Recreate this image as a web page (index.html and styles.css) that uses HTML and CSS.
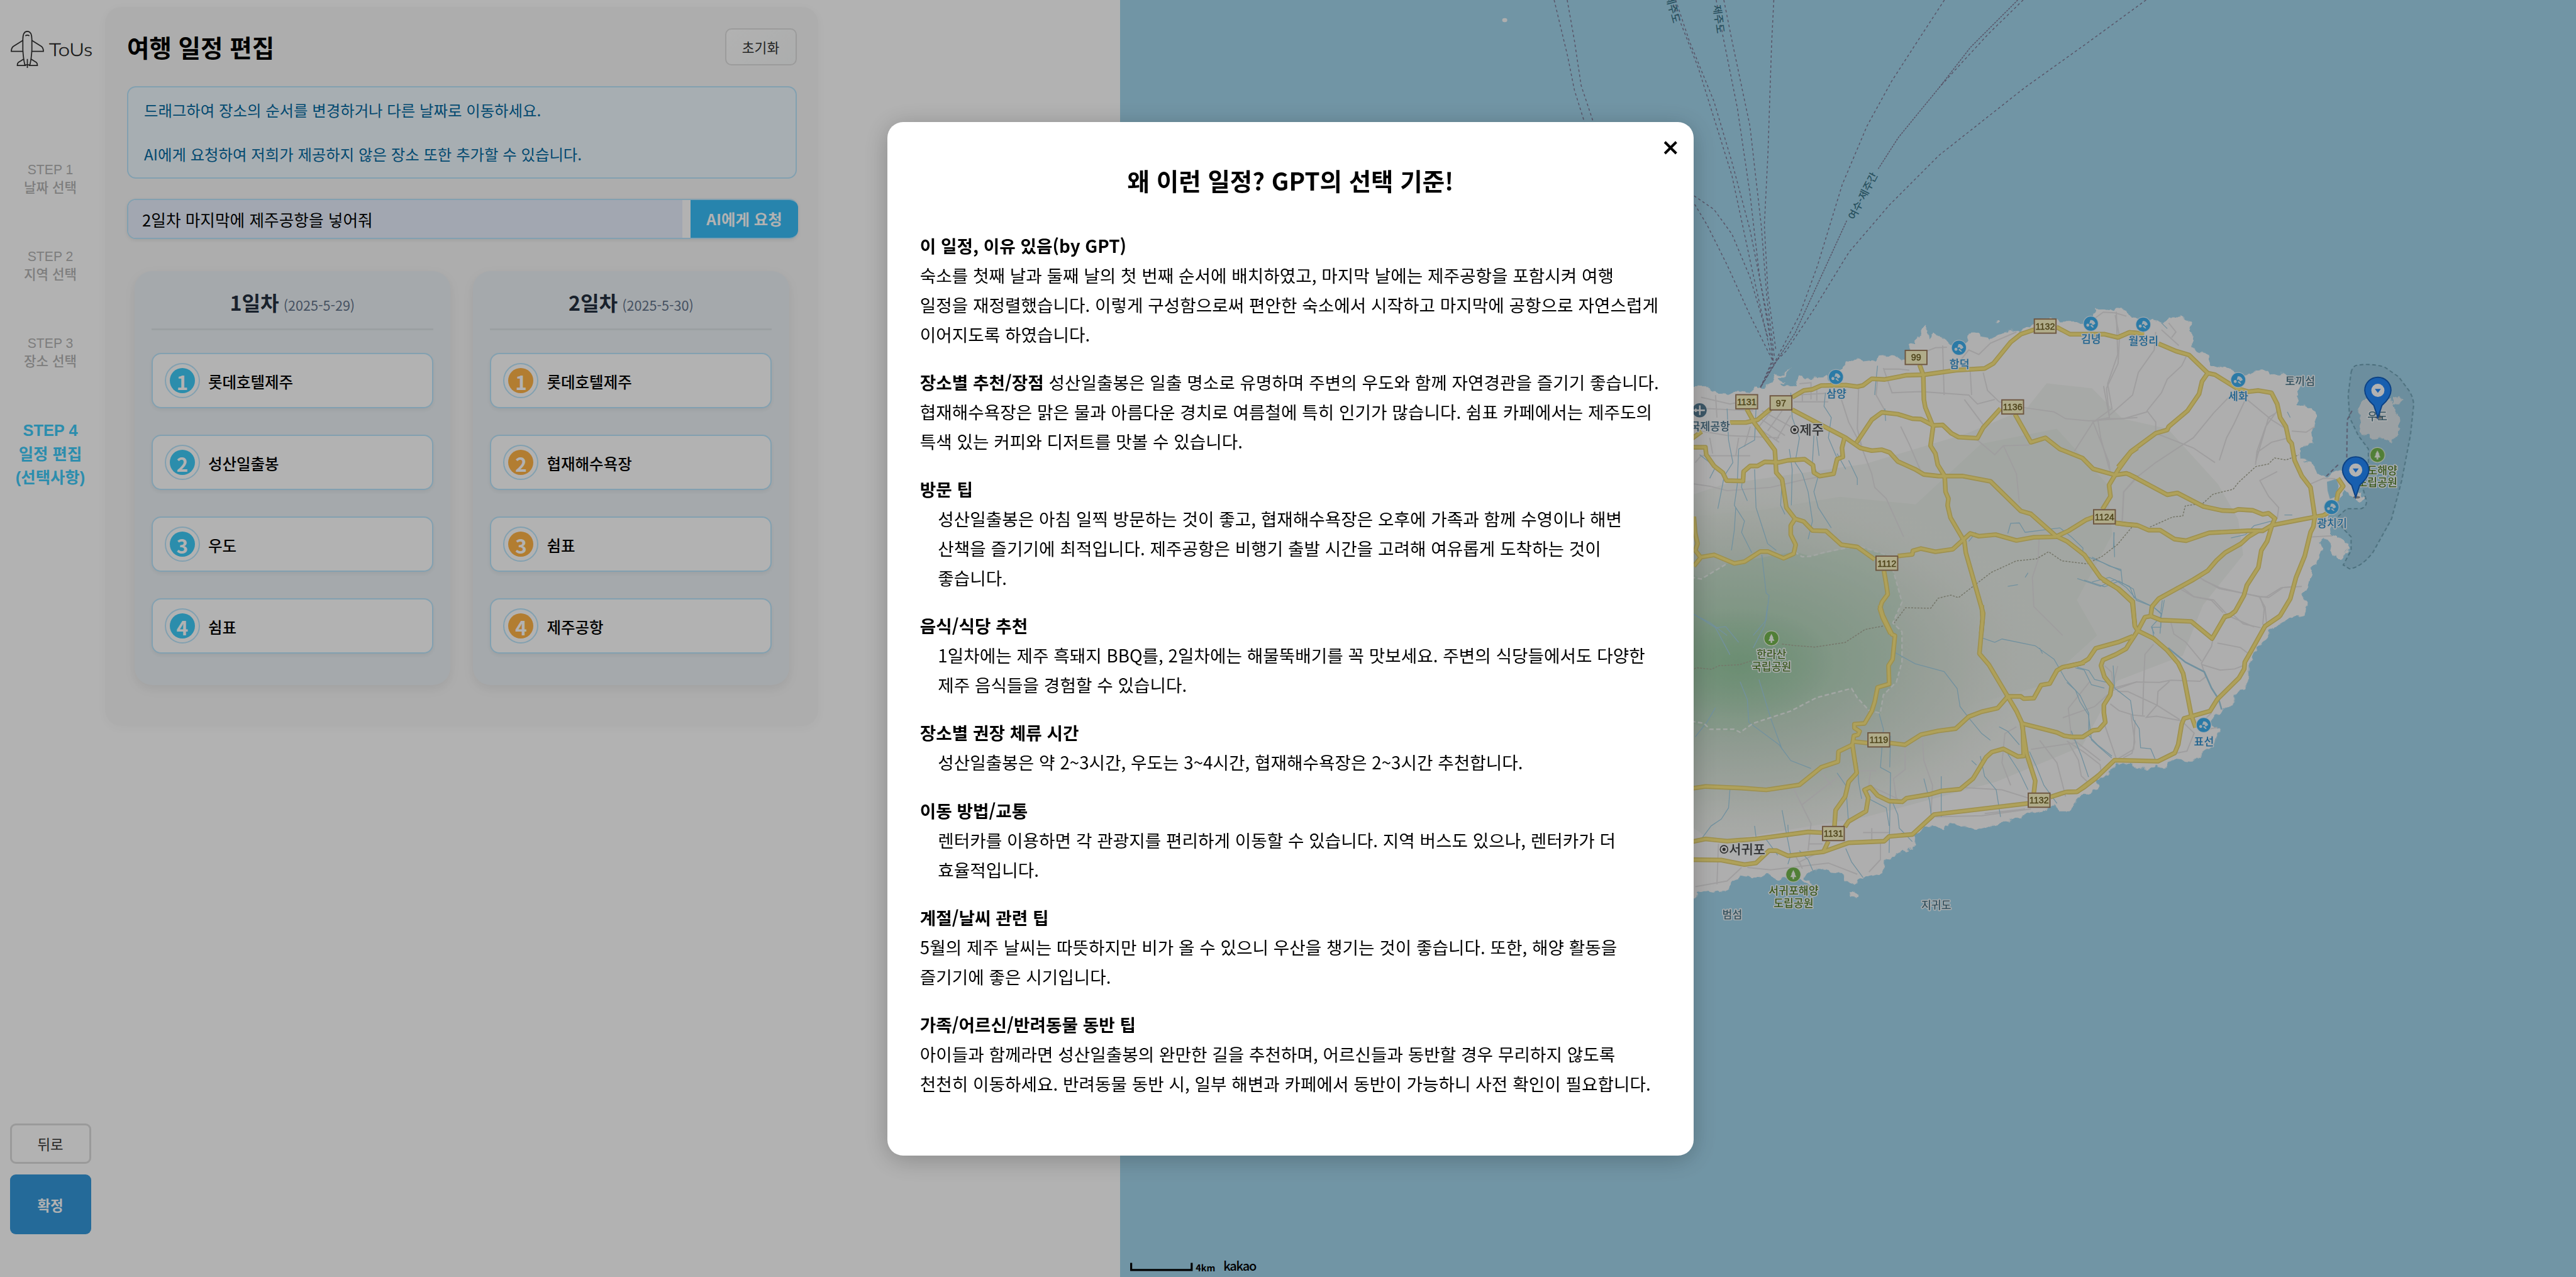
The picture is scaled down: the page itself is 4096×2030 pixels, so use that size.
FILE: index.html
```html
<!DOCTYPE html>
<html lang="ko">
<head>
<meta charset="utf-8">
<title>ToUs - 여행 일정 편집</title>
<link rel="stylesheet" href="styles.css">
</head>
<body>
<div class="app">
  <aside class="sidebar">
    <div class="logo">
      <svg class="logo-plane" viewBox="0 0 66 74">
        <path d="M24 17 Q24 1 33 1 Q42 1 42 17 L42 38 Q41 56 38 68 H28 Q25 56 24 38 Z"/>
        <path d="M24 19 L5 31 Q1 34 1 41 H24 M42 19 L61 31 Q65 34 65 41 H42"/>
        <path d="M26 56 L15 63 Q13 65 13 69 H30 M40 56 L51 63 Q53 65 53 69 H36 M33 56 V74 M29 10 Q33 7 37 10"/>
      </svg>
      <svg class="logo-name" viewBox="0 0 72 30"><text x="0" y="25" textLength="69" lengthAdjust="spacingAndGlyphs">ToUs</text></svg>
    </div>
    <ol class="steps">
      <li class="step">STEP 1<span>날짜 선택</span></li>
      <li class="step">STEP 2<span>지역 선택</span></li>
      <li class="step">STEP 3<span>장소 선택</span></li>
      <li class="step step-active">STEP 4<span>일정 편집</span><span>(선택사항)</span></li>
    </ol>
    <div class="sidebar-actions">
      <button class="btn-back">뒤로</button>
      <button class="btn-confirm">확정</button>
    </div>
  </aside>

  <main class="content">
    <section class="panel">
      <header class="panel-head">
        <h1>여행 일정 편집</h1>
        <button class="btn-reset">초기화</button>
      </header>
      <div class="notice">
        <p>드래그하여 장소의 순서를 변경하거나 다른 날짜로 이동하세요.</p>
        <p>AI에게 요청하여 저희가 제공하지 않은 장소 또한 추가할 수 있습니다.</p>
      </div>
      <div class="ask">
        <div class="ask-input">2일차 마지막에 제주공항을 넣어줘</div>
        <button class="ask-button">AI에게 요청</button>
      </div>
      <div class="days">
        <article class="day">
          <h2>1일차 <small>(2025-5-29)</small></h2>
          <ul>
            <li class="place"><i><b>1</b></i><span>롯데호텔제주</span></li>
            <li class="place"><i><b>2</b></i><span>성산일출봉</span></li>
            <li class="place"><i><b>3</b></i><span>우도</span></li>
            <li class="place"><i><b>4</b></i><span>쉼표</span></li>
          </ul>
        </article>
        <article class="day day-second">
          <h2>2일차 <small>(2025-5-30)</small></h2>
          <ul>
            <li class="place"><i><b>1</b></i><span>롯데호텔제주</span></li>
            <li class="place"><i><b>2</b></i><span>협재해수욕장</span></li>
            <li class="place"><i><b>3</b></i><span>쉼표</span></li>
            <li class="place"><i><b>4</b></i><span>제주공항</span></li>
          </ul>
        </article>
      </div>
    </section>
  </main>

  <svg class="map" viewBox="2222 0 2888 2532" preserveAspectRatio="none">
    <defs>
      <filter id="coast" x="-5%" y="-5%" width="110%" height="110%">
        <feTurbulence type="fractalNoise" baseFrequency="0.06" numOctaves="2" seed="4"/>
        <feDisplacementMap in="SourceGraphic" scale="16" xChannelSelector="R" yChannelSelector="G"/>
      </filter>
      <radialGradient id="halla">
        <stop offset="0" stop-color="#a6cfae"/>
        <stop offset=".3" stop-color="#bfd8c4"/>
        <stop offset=".55" stop-color="#d3e1d5"/>
        <stop offset=".78" stop-color="#e3eae2"/>
        <stop offset="1" stop-color="#ecf0eb" stop-opacity="0"/>
      </radialGradient>
      <radialGradient id="peak">
        <stop offset="0" stop-color="#8fc49a" stop-opacity=".75"/>
        <stop offset="1" stop-color="#8fc49a" stop-opacity="0"/>
      </radialGradient>
      <symbol id="beach" viewBox="-17 -17 34 34">
        <circle r="15.5" fill="#e4f1fa"/><circle r="14" fill="#3eafee"/>
        <path d="M-1-7 Q6-8 9 0 L4 3 L1-1 L-3 0 Z M-6 0 a3 3 0 1 0 .1 0 M1 2 L6 7 L4 8 L-1 4 Z" fill="#e6f4fc"/>
      </symbol>
      <symbol id="park" viewBox="-17 -17 34 34">
        <circle r="15.5" fill="#eef5e6"/><circle r="14" fill="#75b64f"/>
        <path d="M0-9 L4-1 L3-1 L6 5 H1.5 V9 H-1.5 V5 H-6 L-3-1 L-4-1 Z" fill="#f4faef"/>
      </symbol>
      <symbol id="pin" viewBox="-30 -30 60 88">
        <ellipse cx="2" cy="54" rx="7" ry="2.5" fill="#222" opacity=".45"/>
        <path d="M0 54 L-8 30 Q-26 14 -26 0 A26 26 0 0 1 26 0 Q26 14 8 30 Z" fill="#2389fb" stroke="#145fbd" stroke-width="2"/>
        <circle r="13" fill="#fff"/><path d="M-6-3 H6 L0 5 Z" fill="#2389fb"/>
      </symbol>
      <g id="roads">
        <g transform="translate(3340 560) scale(.57398 .44643)">
          <path d="M160 622H215L255 610 300 562M375 510L415 480 445 475 475 458 560 456 600 463 620 457 650 428 695 431 770 412 830 410 940 390 1040 382 1070 360 1130 265 1165 230 1215 208M1288 198L1335 230H1455L1500 244 1540 222 1568 225"/>
          <path d="M218 562L245 625 315 745 320 845 340 875 355 1000 385 1050 415 1062 445 1102 492 1104 545 1165 600 1175 660 1230M692 1280L700 1340 705 1385 685 1420 678 1450 688 1490 715 1560"/>
          <path d="M385 1050L370 1080V1120L387 1165 380 1205 345 1225 290 1195H265L210 1240 175 1248 105 1210 60 1220 35 1260M35 1040L40 1115 48 1160 40 1190 58 1220M30 692L62 662"/>
          <path d="M375 565L560 690 610 735 650 747 685 743 712 755 740 795 800 830 830 853 880 860H965L1060 883 1165 1015 1200 1028 1285 1125 1325 1150 1385 1210 1440 1310 1500 1360 1550 1420 1560 1530"/>
          <path d="M815 365L828 410 830 520 835 555 862 640 853 725 870 760 878 810 902 860 905 930 915 960 912 990 922 1045 970 1150 975 1200 1005 1335 1035 1470 1028 1560"/>
          <path d="M597 712L650 610 685 577 740 585 790 605 820 607 862 635 895 633 925 670 950 687 1015 692 1035 645 1095 560M1145 585L1200 710 1250 690 1300 740 1378 780 1415 828 1490 855 1530 848 1568 870"/>
          <path d="M20 732H75L78 765 105 815 135 845 148 880 205 882 207 840 230 815H255L280 797 330 799 360 790 418 785 447 812 450 845 470 860 518 850 530 785 550 775 547 735 556 690"/>
          <path d="M740 1215L790 1208 792 1192 820 1182 870 1196 930 1185 990 1115 1020 1127 1078 1120 1150 1146 1210 1132 1285 1130 1330 1103 1390 1055 1417 1042M1447 1008L1475 950 1470 900 1500 835 1545 755 1568 735M1492 1068L1530 1075 1568 1078"/>
        </g>
        <g transform="translate(4150 560) scale(.57398 .44643)">
          <path d="M90 244L130 222 180 228M230 272L290 305 335 322 400 403 425 410 500 470 540 485 575 480 620 490 640 540 650 600 670 640 680 700 690 715 700 790 725 860 755 910 770 1040 765 1085 755 1110 735 1215 705 1310 685 1405 650 1480 605 1520"/>
          <path d="M400 403L380 440 370 495 330 570 265 640 260 655 220 670 135 750 90 820"/>
          <path d="M125 850L260 943 295 935 385 995 450 1013 490 1015 505 1008 555 1012 590 1030 610 1025 632 1048 622 1078M80 1068L160 1080 195 1100H235L285 1140 325 1147 405 1112 540 1103H590L622 1078 735 1050 800 1035 825 1015"/>
          <path d="M622 1078L605 1150 585 1190 575 1265 535 1345 525 1390 495 1460 475 1480 455 1485M575 1103L540 1130 515 1160 460 1200 430 1235 400 1280 350 1320 230 1405 207 1440 203 1480M850 870L868 905 850 935 845 970"/>
        </g>
        <g transform="translate(3340 1200) scale(.57398 .44643)">
          <path d="M678 0L688 45 720 130 730 135 722 240 708 268 710 350 670 365 660 430 650 470 625 525 590 528V545L608 560 603 575 588 580 583 620 590 680 598 745 570 785 558 850 525 910 521 982M500 1048L483 1095"/>
          <path d="M583 605L635 612M713 612L765 620 820 575 880 558 940 548 985 495 1030 473 1085 457 1120 405 1165 405 1175 415 1210 413 1235 355 1265 348 1290 290 1310 275 1385 255"/>
          <path d="M583 620L535 650 533 695 475 720 400 798 285 820 200 812 75 805 20 815M1030 0L1033 60 1022 215 1055 265 1150 470 1168 520 1185 660 1215 780 1210 835M1172 540L1175 670 1155 672 1105 638 1065 652 1045 675 1000 770 955 817 890 825 850 840 770 857 755 873 710 870 670 845 645 808 625 820 638 855 630 915 570 960 557 985"/>
          <path d="M1168 525L1290 565 1315 580 1340 585M20 1053L75 1038 150 1048 250 1038 430 1007 478 1010M20 1130L130 1132 210 1152 250 1145 295 1090H320L360 1113 483 1095 570 1055 693 1048 710 1027 790 1018 865 930 1190 880M1267 852L1320 830 1360 828 1435 755"/>
        </g>
        <g transform="translate(4100 1150) scale(.57398 .44643)">
          <path d="M125 0L180 40 228 95 235 205 245 225 300 260 345 310 385 370 402 415 430 600 445 655M245 225L270 165 290 160 325 178 430 184 502 260 545 165 565 155"/>
          <path d="M735 162L685 205 635 320 615 365 613 395 595 435 520 530 495 582 405 615 397 640 385 730 373 768 315 805 165 800 100 880 60 920 35 940 0 942"/>
          <path d="M245 225L230 255 212 290 205 305 170 330 125 355 118 380 130 430 155 470 150 510 128 555V590L133 632 110 665 90 668 55 697 10 697M228 250L180 275 100 303 75 350 50 370 0 385"/>
        </g>
      </g>
    </defs>

    <rect class="sea" x="2222" width="2888" height="2532"/>

    <g class="ferry" transform="translate(2900 0) scale(.89286 .44643)">
      <path d="M205 0L235 250 250 400 275 560M234 0L250 180 265 380 295 560"/>
      <path d="M470 20L525 300 600 780 645 1200 685 1560 692 1604 663 1720M475 0L505 180 560 450 600 720 640 1020 680 1420 692 1604"/>
      <path d="M565 0L580 160 612 480 640 860 662 1240 690 1560M582 0L600 180 640 560 665 1000 678 1330 694 1580 663 1725"/>
      <path d="M693 0L688 200 680 680 672 1000 680 1300 698 1560M1072 0L1010 190 955 360 900 560 845 820 790 1180 750 1400 700 1590 663 1722"/>
      <path d="M1247 0L1170 150 1110 280 1060 390M1520 0L1390 190 1250 390 1060 690 950 910 860 1120 780 1380 720 1560 700 1600 663 1722"/>
      <path d="M516 870L560 930 600 1040 640 1230 680 1500M500 850L545 1000 590 1180 640 1400 690 1600"/>
      <path class="ferry-dense" d="M1235 0L1130 210 1095 300 1060 390 1015 500 970 610 925 750M855 980L800 1220 740 1480 700 1600 663 1722"/>
    </g>

    <ellipse class="land" cx="2985" cy="40" rx="5" ry="4"/>
    <g class="land" filter="url(#coast)">
      <path transform="translate(3340 560) scale(.57398 .44643)" d="M-200 470L60 460 85 462 105 485 135 492 165 495 180 478 235 482 245 460 255 480 285 462 305 440 320 402 335 435 350 440 332 455 390 458 398 412 420 430 430 420 470 425 495 412 500 440 525 435V400L548 380 570 345 590 335 620 350 660 345 670 330 725 325 750 345 770 340 780 275 800 270V245L820 235 828 198 845 215 850 250 868 220 885 240 920 275 950 290 980 265 985 225 1005 222 1020 240 1060 250 1110 215 1170 208 1205 190 1225 165 1290 160 1300 180 1385 178 1420 155 1422 118 1460 122 1475 115 1485 128 1505 130 1512 115 1535 130 1545 150 1590 165V1600H-200Z"/>
      <path transform="translate(4150 560) scale(.57398 .44643)" d="M0 165L10 118 65 125 100 115 125 150 150 158 210 170 250 180 275 155 305 155 340 175 335 200 350 215 345 280 370 310 400 320 412 365 460 375 500 400 530 410 555 395 605 390 620 405 665 408 690 430 725 450 712 480 702 545 740 548 770 570 775 630 760 665 765 715 735 720 718 735 720 790 755 795 770 840 810 865 840 840 865 835 890 890 920 930 938 960 925 978 895 950 872 920 855 970 830 1010 820 1040 830 1120 860 1140 888 1175 860 1230 825 1200 830 1160 800 1135 785 1150 795 1180 780 1240 762 1260 755 1310 745 1360 722 1385 740 1420 738 1470 700 1485 640 1520 612 1540 560 1600H-20V165ZM918 575L935 525 960 515 990 510 1035 520 1045 565 1062 600 1065 650 1045 690 1030 712 1005 690 975 695 955 680 935 680 925 660 930 620ZM1040 515L1055 505 1078 520 1055 530 1040 545Z"/>
      <path transform="translate(3340 1200) scale(.57398 .44643)" d="M-200-20H1600V720L1540 705 1490 705 1470 745 1430 780V815L1365 850 1350 885 1330 915 1300 915 1280 890 1240 910 1180 930 1100 970 1015 998 985 985 905 970 900 990 880 985 830 990 800 1015 798 1075 760 1090 740 1110 700 1130 690 1190 620 1215 590 1240 555 1220 550 1190 510 1185 460 1172 420 1205 440 1250 400 1215 340 1210 325 1218 285 1198 240 1210 195 1200 165 1235 160 1255 120 1278 80 1268 40 1280V1300L-200 1280ZM575 1275L590 1272 605 1285 600 1300 580 1298Z"/>
      <path transform="translate(4100 1150) scale(.57398 .44643)" d="M0-20H835L832 35 808 60 828 100 822 155 750 180 695 215 698 250 650 300 658 320 630 360 632 435 610 485 580 510 570 555 540 578 505 610 500 650 530 665 520 700 505 740 470 770 460 790 430 810 370 800 330 840 310 820 280 838 240 835 220 815 170 815 150 850 120 855 100 920 40 960 30 990 0 1025Z"/>
      <path d="M3490 775L3553 728 3550 732 3497 782Z"/>
      <circle cx="3963" cy="640" r="3"/>
    </g>
    <path class="sea" transform="translate(4150 560) scale(.57398 .44643)" d="M812 885L845 872 852 905 845 950 822 962 814 925Z"/>

    <g class="terrain">
      <path d="M3420 960L3700 920 3900 860 4020 810 4060 760 4150 770 4210 830 4300 850 4400 960 4440 1030 4450 1100 4370 1200 4330 1300 4200 1350 4130 1480 3960 1550 3700 1620 3400 1670 3300 1600V1000Z" fill="#f0f3ef"/>
      <path d="M3500 1010L3650 985 3800 1000 3930 880 4080 850 4180 960 4190 1060 4120 1190 4160 1260 4050 1360 3900 1400 3780 1500 3600 1560 3300 1580V1030Z" fill="#e9eee8"/>
      <ellipse cx="3440" cy="1310" rx="620" ry="350" fill="url(#halla)"/>
      <ellipse cx="3452" cy="1318" rx="190" ry="110" fill="url(#peak)"/>
      <path class="park-area" d="M3340 1130L3375 1148 3425 1118 3560 1094 3592 1103 3685 1082 3742 1100 3757 1136 3773 1194 3755 1235 3773 1253 3773 1312 3762 1352 3736 1378 3730 1414 3707 1408 3684 1383 3673 1365 3604 1383 3552 1410 3478 1434 3452 1452 3392 1446 3340 1428Z"/>
    </g>

    <g class="minor">
      <g transform="translate(3340 560) scale(.57398 .44643)">
        <path d="M35 895L90 905 150 925 300 910 400 880 475 862M605 455L602 560 600 650 620 750 650 850 660 910 700 960 760 1130M895 280L900 500M1035 400L1050 480 1090 530 1170 555 1280 575 1320 605 1400 615 1568 600M1495 130L1500 320 1465 450 1480 560 1415 620 1350 750M545 520L570 620 620 740M690 380L720 490 820 485 985 500 1015 540 1075 520M970 520L1040 640 1015 700 1075 765 1105 725 1195 722M1105 725L1150 850 1160 980M1415 620L1470 800 1475 860M780 390L745 385 690 385M750 640L780 720 820 840M830 310L870 290 910 288M960 340L985 300 1020 320 1060 270 1150 220M990 390L995 500M1420 160L1450 132 1490 135 1530 150M670 430L665 500 700 580M1568 860L1520 930 1515 1060M1228 1140L1225 1230 1205 1310 1210 1440 1310 1568"/>
        <path d="M60 510L160 540 240 520M80 560L240 570M60 660L150 680 330 690M110 500L115 600M200 500L195 560M270 570L370 640M260 600L350 680M250 640L330 710M310 560L260 640M340 570L290 660M370 590L320 700M400 450L440 445V520M380 500L530 490M460 470V525M40 800L60 770 230 770M190 690L180 770M90 690L100 760M230 640L210 730M380 530H500M410 500V530"/>
      </g>
      <g transform="translate(4150 560) scale(.57398 .44643)">
        <path d="M80 145L95 240 90 360 50 470 60 600M220 220L215 300 160 400 140 500 60 590M325 330L310 370 260 430 240 490 190 570 220 620 220 670 350 735 425 800M0 620L40 605 110 605 190 575M530 520L490 630 465 690 440 790M535 520L620 610 670 650M480 500L420 580 350 690 220 800 160 860 110 930 105 1060M640 570L600 640 570 750 565 810M680 690L620 710 570 755M635 580L610 600 565 800M755 895L800 870 840 872M690 660L740 665 770 640M240 210L300 280M265 180L290 220 275 245M640 840L580 880 610 950 645 1000 640 1050M560 1120L510 1160M370 1310L440 1360 580 1395 610 1400 660 1355 725 1350M290 1350L350 1395 420 1410 470 1480 560 1530M580 1395L595 1450 590 1520M760 1130L830 1125M40 460L60 600 20 610 30 690 60 830"/>
      </g>
      <g transform="translate(3340 1200) scale(.57398 .44643)">
        <path d="M380 815L440 970 430 1090M545 750L410 885M765 620V730L725 770 735 860M825 590L830 690 860 800 855 920M600 735H665M645 740L640 800 740 860M480 750L510 800M680 1050V1130L640 1185M600 1195L500 1145 300 1175 220 1165M120 1060L115 1240M40 1250L150 1225 200 1165M870 940L1030 935 1200 905M1040 925L1180 905M620 1010H710M650 990V1060M430 1060H480M385 1110L410 1170 400 1140 480 1090M970 810L1100 820 1200 860M1230 600L1290 700 1320 850M1200 640L1360 610 1340 590M1150 540L1110 570 1100 700 1130 800M1350 600L1440 690M1500 270L1480 370 1568 340M1480 380L1420 450 1310 500M1560 510L1555 640 1490 690"/>
      </g>
      <g transform="translate(4100 1150) scale(.57398 .44643)">
        <path d="M300 285L270 330 265 470 262 600M160 490L240 453 320 455 360 445 460 450 480 430 465 370 500 295 505 260M360 190L370 240 410 275 465 360M520 280L600 300 625 325M465 375L530 400 580 395 610 380M355 450L315 495 312 555 275 610 310 605 395 625M210 495L310 555 390 620M175 495H210M150 550L180 580 230 600 270 605M222 600L235 720 225 770 195 790M130 640L170 790M395 30L440 75 500 90 540 145M470 0L530 35 665 75 690 75 740 35 790 28M665 75L685 120 690 190M575 155L610 195 670 212M130 380L155 410 160 480M375 770L415 760 440 680 400 630M440 650L480 665 520 655M500 590L480 615M0 715L60 765 115 820 118 850M5 720L40 800 50 870 70 895M80 450L5 570 15 690"/>
      </g>
    </g>

    <g class="stream">
      <g transform="translate(3340 560) scale(.57398 .44643)">
        <path d="M150 560L155 700 170 800 140 860 125 960 118 1005M250 560L245 700 190 740 185 900 175 990 210 1060 200 1110 235 1200M370 490L375 600 400 690 385 800 410 850 430 930 445 1060 430 1140M450 680L445 800 465 860 450 930 465 1000 510 1090M245 830L250 1000 270 1080 290 1160 320 1190M205 850L200 910 220 970M55 765L110 820 90 870M365 740L375 830 372 990M490 490L485 550 510 600 500 690 530 780M570 790L600 870 600 900M340 880L335 990 350 1030M165 1190L175 1100 180 1000M670 370L665 430 660 500M270 1210L285 1380 295 1390 285 1500 240 1568M530 760L560 830M455 640L468 770M695 560L698 615M1120 1115L1130 1070 1160 1068 1180 1110 1300 1090 1340 1130 1380 1180 1378 1210 1450 1245 1510 1280M1120 1350L1155 1342M1180 1310L1190 1290M1360 1315L1440 1350 1490 1320 1530 1355 1560 1400M1488 1110L1485 1180M35 1475L90 1510 150 1568M985 1150L1010 1110"/>
      </g>
      <g transform="translate(4150 560) scale(.57398 .44643)">
        <path d="M0 1220L60 1260 100 1275 105 1340M0 1330L60 1310 130 1350 145 1400 210 1440 240 1470 235 1560M250 1410L240 1480 205 1530 215 1560M480 1135L530 1120 560 1080 620 1060M665 1033H692M75 1110L78 1220M240 180L260 205M675 575L685 600"/>
      </g>
      <g transform="translate(3340 1200) scale(.57398 .44643)">
        <path d="M35 40L110 100 145 95 190 165M110 100L160 220M290 0L280 90 240 190M195 340L220 420 225 520 330 620 370 690 440 725M260 330L300 500 340 640M40 585L80 520 110 455M730 210L800 260 900 295 945 370 955 450 985 500 1030 570 1060 600M1030 145L1075 165 1100 150 1215 180 1280 240 1320 330 1370 400 1400 480 1400 580 1430 620 1480 670M675 480L690 550 680 720 715 745 710 1100M715 580L712 720M160 815L155 900 130 950 95 980 60 1040M245 980L250 1030M340 910L350 980 370 1110 360 1150M360 975L362 1030M285 1040L325 1110M400 1090L430 1130 450 1190M530 745L560 800 570 970M600 700L605 790 615 860M560 1080L580 1140 620 1210M640 860L700 900 710 980M720 870L740 930 745 990 790 1050M830 770L850 870 855 930M890 760L890 940M1090 540L1120 560 1160 620M1195 650L1220 720 1245 800 1290 880M1120 660L1160 740 1190 820M1025 670L1040 760 1080 820 1095 940M995 690L1012 710M1230 190L1240 215M1360 275L1400 290 1420 330 1470 345"/>
      </g>
      <g transform="translate(4100 1150) scale(.57398 .44643)">
        <path d="M60 0L130 30 180 5 230 40 240 90 300 120 325 150V210L295 210 300 250 320 275M330 90L325 140M30 390L60 400 85 465 130 480M160 380L165 480 220 535 230 620 250 660 255 745 290 750 305 795M0 455L30 490 45 540 75 600 85 710 110 740 155 790M15 670L50 780 75 875"/>
        <path class="stream-wide" d="M350 302L410 365 475 408 500 480 525 530 535 575"/>
      </g>
    </g>

    <g class="trail">
      <path d="M3340 1340L3365 1324 3395 1327 3410 1320 3450 1318 3475 1310M3535 1277L3560 1280 3600 1283 3660 1274 3700 1248 3737 1241M3757 1236L3780 1205 3830 1206 3845 1186 3870 1180 3885 1185 3950 1135 4000 1112 4040 1108 4064 1094 4090 1112 4140 1118 4170 1103 4200 1080 4230 1044"/>
      <path d="M4265 1045L4310 1025 4330 1023 4335 1003 4370 998 4390 980 4430 970 4440 957 4475 925 4500 920 4512 908 4535 912 4560 902"/>
    </g>
    <path class="park-line" d="M3300 1135L3375 1148 3425 1118 3430 1110M3560 1094L3575 1104 3592 1103 3620 1095 3685 1082 3742 1100 3757 1136 3773 1194 3755 1235 3773 1253 3773 1312 3762 1352 3736 1378 3730 1414 3707 1408 3684 1383 3673 1365 3604 1383 3552 1410 3478 1434 3452 1452 3440 1446 3392 1446 3380 1434 3340 1428"/>

    <use href="#roads" class="road-edge"/>
    <use href="#roads" class="road-fill"/>

    <g class="marine" transform="translate(4150 560) scale(.57398 .44643)">
      <path d="M895 400Q900 372 915 368Q960 358 1010 375L1060 420 1095 480Q1115 520 1110 560L1100 680 1070 880 1035 1050 970 1200Q930 1265 890 1272L868 1255 895 1190V1130L865 1090 850 1040 880 1005 930 1005Q950 995 948 970L935 910 955 800V740L920 680 890 600 885 500Z"/>
      <path class="ferry-short" d="M898 570L882 610 880 790M850 810L810 860"/>
    </g>

    <g class="signs">
      <g transform="translate(3465 796.6)"><rect/><text>1131</text></g>
      <g transform="translate(3533 798.8)"><rect/><text>97</text></g>
      <g transform="translate(3801 708.7)"><rect/><text>99</text></g>
      <g transform="translate(4057 646.6)"><rect/><text>1132</text></g>
      <g transform="translate(3992.6 806.9)"><rect/><text>1136</text></g>
      <g transform="translate(4174.6 1024.7)"><rect/><text>1124</text></g>
      <g transform="translate(3743 1116.7)"><rect/><text>1112</text></g>
      <g transform="translate(3727 1467)"><rect/><text>1119</text></g>
      <g transform="translate(4045 1586.6)"><rect/><text>1132</text></g>
      <g transform="translate(3637 1652.7)"><rect/><text>1131</text></g>
    </g>

    <g class="label label-beach">
      <use href="#beach" x="3625" y="730.5" width="34" height="34"/><text x="3643" y="788">삼양</text>
      <use href="#beach" x="3869" y="672.5" width="34" height="34"/><text x="3887" y="729.5">함덕</text>
      <use href="#beach" x="4130.6" y="624.7" width="34" height="34"/><text x="4148" y="679.5">김녕</text>
      <use href="#beach" x="4234.6" y="626.5" width="34" height="34"/><text x="4252" y="683">월정리</text>
      <use href="#beach" x="4423" y="736.3" width="34" height="34"/><text x="4440" y="793.4">세화</text>
      <use href="#beach" x="4608" y="988.5" width="34" height="34"/><text x="4626" y="1045.7">광치기</text>
      <use href="#beach" x="4354.5" y="1420.5" width="34" height="34"/><text x="4372" y="1478">표선</text>
    </g>
    <g class="label label-park">
      <use href="#park" x="4699" y="885" width="34" height="34"/><text x="4716" y="940">우도해양</text><text x="4716" y="964.4">도립공원</text>
      <use href="#park" x="3497" y="1248.6" width="34" height="34"/><text x="3514" y="1305">한라산</text><text x="3514" y="1329.4">국립공원</text>
      <use href="#park" x="3540.5" y="1717" width="34" height="34"/><text x="3558" y="1773.6">서귀포해양</text><text x="3558" y="1798">도립공원</text>
    </g>
    <g class="label label-isle">
      <text x="4562.7" y="763.5">토끼섬</text><text x="4716" y="833.6">우도</text>
      <text x="3436.4" y="1821">범섬</text><text x="3841" y="1801.8">지귀도</text>
    </g>
    <g class="label label-air">
      <circle cx="3371.6" cy="813.6" r="14"/><path d="M3360 813.6H3382M3372 804V823M3364 810V817"/>
      <text x="3432" y="853.7">제주국제공항</text>
    </g>
    <g class="label label-city">
      <circle cx="3560" cy="852" r="7.5"/><circle class="dot" cx="3560" cy="852" r="3.2"/><text x="3570" y="862">제주</text>
      <circle cx="3420" cy="1684" r="7.5"/><circle class="dot" cx="3420" cy="1684" r="3.2"/><text x="3430" y="1694">서귀포</text>
    </g>
    <g class="label-ferry">
      <text transform="translate(3702 392) rotate(-62.7)">여수-제주간</text>
      <text class="cut" transform="translate(3319 47) rotate(75)">제주도</text>
      <text class="cut" transform="translate(3406 67) rotate(82)">제주도</text>
    </g>

    <use href="#pin" x="4687" y="744" width="60" height="88"/>
    <use href="#pin" x="4643" y="902" width="60" height="88"/>

    <g class="scale">
      <path d="M2244 2504V2518H2364V2504"/>
      <text x="2372" y="2521" class="scale-km" textLength="39">4km</text>
      <text x="2427" y="2520" class="scale-brand" textLength="66">kakao</text>
    </g>
  </svg>
</div>

<div class="overlay">
  <div class="modal">
    <button class="modal-close">×</button>
    <h2>왜 이런 일정? GPT의 선택 기준!</h2>
    <section>
      <h3>이 일정, 이유 있음(by GPT)</h3>
      <p>숙소를 첫째 날과 둘째 날의 첫 번째 순서에 배치하였고, 마지막 날에는 제주공항을 포함시켜 여행<br>일정을 재정렬했습니다. 이렇게 구성함으로써 편안한 숙소에서 시작하고 마지막에 공항으로 자연스럽게<br>이어지도록 하였습니다.</p>
    </section>
    <section>
      <p><strong>장소별 추천/장점</strong> 성산일출봉은 일출 명소로 유명하며 주변의 우도와 함께 자연경관을 즐기기 좋습니다.<br>협재해수욕장은 맑은 물과 아름다운 경치로 여름철에 특히 인기가 많습니다. 쉼표 카페에서는 제주도의<br>특색 있는 커피와 디저트를 맛볼 수 있습니다.</p>
    </section>
    <section>
      <h3>방문 팁</h3>
      <p class="indent">성산일출봉은 아침 일찍 방문하는 것이 좋고, 협재해수욕장은 오후에 가족과 함께 수영이나 해변<br>산책을 즐기기에 최적입니다. 제주공항은 비행기 출발 시간을 고려해 여유롭게 도착하는 것이<br>좋습니다.</p>
    </section>
    <section>
      <h3>음식/식당 추천</h3>
      <p class="indent">1일차에는 제주 흑돼지 BBQ를, 2일차에는 해물뚝배기를 꼭 맛보세요. 주변의 식당들에서도 다양한<br>제주 음식들을 경험할 수 있습니다.</p>
    </section>
    <section>
      <h3>장소별 권장 체류 시간</h3>
      <p class="indent">성산일출봉은 약 2~3시간, 우도는 3~4시간, 협재해수욕장은 2~3시간 추천합니다.</p>
    </section>
    <section>
      <h3>이동 방법/교통</h3>
      <p class="indent">렌터카를 이용하면 각 관광지를 편리하게 이동할 수 있습니다. 지역 버스도 있으나, 렌터카가 더<br>효율적입니다.</p>
    </section>
    <section>
      <h3>계절/날씨 관련 팁</h3>
      <p>5월의 제주 날씨는 따뜻하지만 비가 올 수 있으니 우산을 챙기는 것이 좋습니다. 또한, 해양 활동을<br>즐기기에 좋은 시기입니다.</p>
    </section>
    <section>
      <h3>가족/어르신/반려동물 동반 팁</h3>
      <p>아이들과 함께라면 성산일출봉의 완만한 길을 추천하며, 어르신들과 동반할 경우 무리하지 않도록<br>천천히 이동하세요. 반려동물 동반 시, 일부 해변과 카페에서 동반이 가능하니 사전 확인이 필요합니다.</p>
    </section>
  </div>
</div>
</body>
</html>
```
FILE: styles.css
```css
* { box-sizing: border-box; margin: 0; padding: 0; }
body {
  width: 4096px;
  height: 2030px;
  overflow: hidden;
  background: #fff;
  color: #000;
  font-family: "Noto Sans CJK KR", "Noto Sans", sans-serif;
  white-space: nowrap;
}
button { font-family: inherit; display: flex; align-items: center; justify-content: center; }
ul, ol { list-style: none; }

.app { display: flex; width: 4096px; height: 2030px; }

/* step navigation */
.sidebar { width: 160px; display: flex; flex-direction: column; padding: 49px 0 68px; }
.logo { display: flex; align-items: flex-start; gap: 8px; padding-left: 17px; height: 60px; }
.logo-plane { width: 53px; height: 59px; fill: none; stroke: #333; stroke-width: 2.2; }
.logo-name { width: 72px; height: 30px; margin-top: 15px; overflow: visible; }
.logo-name text { font-family: Lato, sans-serif; font-weight: 300; font-size: 28px; fill: #222; stroke: #222; stroke-width: .5px; }
.steps { flex: 1; padding-top: 146px; }
.step {
  height: 138px;
  font-family: "Liberation Sans", "Noto Sans CJK KR", sans-serif;
  font-size: 21.2px;
  line-height: 29px;
  color: #b4b4b4;
  text-align: center;
}
.step span { display: block; font-weight: 500; }
.step-active { margin-top: -3px; color: #40cbf8; font-size: 25.4px; line-height: 37.6px; font-weight: 700; }
.step-active span { font-weight: 700; }
.sidebar-actions { display: flex; flex-direction: column; gap: 17px; padding: 0 15.5px; }
.btn-back { height: 64px; border: 3px solid #ddd; border-radius: 9px; background: #fff; color: #333; font-size: 22.4px; }
.btn-confirm { height: 95px; border: 0; border-radius: 9px; background: #3498db; color: #fff; font-size: 22.4px; font-weight: 700; }

/* schedule editor */
.content { width: 1621px; padding: 11px 0 0 7px; }
.panel {
  width: 1134px;
  height: 1143px;
  padding: 34px 34.5px 0 35px;
  border-radius: 26px;
  background: #f8f8f8;
  box-shadow: 0 3px 16px rgba(0, 0, 0, .03);
}
.panel-head { display: flex; align-items: center; justify-content: space-between; height: 59px; }
.panel-head h1 { font-size: 38.5px; font-weight: 700; line-height: 59px; }
.btn-reset { width: 114px; height: 59px; border: 2px solid #dedede; border-radius: 10px; background: linear-gradient(135deg, #fff, #f6f8f8); color: #333; font-size: 21.5px; }
.notice {
  margin-top: 32.5px;
  height: 147px;
  padding: 1px 25px;
  border: 2px solid #bae6fd;
  border-radius: 14px;
  background: #f0f9ff;
  color: #0369a1;
  font-size: 24.4px;
  line-height: 70.6px;
}
.notice p { height: 70.6px; }
.ask {
  display: flex;
  gap: 13px;
  width: 1067px;
  height: 64px;
  margin-top: 32px;
  border: 2px solid #bae6fd;
  border-right: 0;
  border-radius: 14px;
  background: #fff;
  overflow: hidden;
  box-shadow: 0 2px 6px rgba(0, 0, 0, .08);
}
.ask-input { flex: 1; padding-left: 22px; background: #e8f0fe; font-size: 25.7px; line-height: 61px; }
.ask-button { width: 171px; border: 0; background: #38bdf8; color: #fff; font-size: 24.4px; font-weight: 700; }
.days { display: flex; gap: 36px; margin-top: 51px; padding-left: 11.5px; }
.day {
  width: 502.6px;
  height: 658px;
  padding: 24px 27.4px 0;
  border-radius: 28px;
  background: #edf3f7;
  box-shadow: 0 6px 18px rgba(0, 0, 0, .07);
}
.day h2 { height: 70px; border-bottom: 3px solid #dfe5e9; color: #243040; font-size: 32.2px; font-weight: 700; line-height: 51px; text-align: center; }
.day small { margin-left: -2px; color: #64748b; font-size: 21.6px; font-weight: 400; }
.day ul { display: flex; flex-direction: column; gap: 42px; padding-top: 36px; }
.place {
  display: flex;
  align-items: center;
  height: 88px;
  padding-left: 19px;
  border: 2px solid #bae6fd;
  border-radius: 15px;
  background: #fff;
  font-size: 24.5px;
  font-weight: 500;
  box-shadow: 0 3px 7px rgba(0, 0, 0, .06);
}
.place i { display: flex; width: 56px; height: 56px; padding: 6px; border: 2px solid #bae6fd; border-radius: 50%; font-style: normal; }
.place b { width: 40px; height: 40px; border-radius: 50%; background: #3ecbf7; color: #fff; font-size: 31.5px; line-height: 42px; text-align: center; }
.place span { margin-left: 13px; padding-top: 4px; }
.day-second b { background: #ffb347; }

/* map */
.map { width: 2315px; height: 2030px; display: block; font-family: "Noto Sans CJK KR", sans-serif; }
.map path { vector-effect: non-scaling-stroke; }
.sea { fill: #a3d6ed; }
.land { fill: #faf9f9; }
.ferry path { fill: none; stroke: #7f7a96; stroke-width: 1.5; stroke-dasharray: 4 4; }
.ferry .ferry-dense { stroke-dasharray: 3 1.5; }
.park-area { fill: #a9d6b3; opacity: .28; }
.minor path { fill: none; stroke: #e4e3e4; stroke-width: 2; }
.stream path { fill: none; stroke: #a3d0e4; stroke-width: 1.3; }
.stream .stream-wide { stroke-width: 2.6; }
.trail path { fill: none; stroke: #a8aa98; stroke-width: 1.5; stroke-dasharray: 3 2; }
.park-line { fill: none; stroke: #e8eeea; stroke-width: 2.4; stroke-dasharray: 7 4; }
.road-edge, .road-fill { fill: none; stroke-linejoin: round; }
.road-edge { stroke: #e2cf70; stroke-width: 7.4px; }
.road-fill { stroke: #fbe782; stroke-width: 4.2px; }
.marine path { fill: #7fa9ba; fill-opacity: .22; stroke: #6b9db0; stroke-width: 1.8; stroke-dasharray: 6 4; }
.marine .ferry-short { fill: none; stroke: #7f7a96; }
.signs rect { x: -21.5px; y: -14px; width: 43px; height: 28px; fill: #fdf6c6; stroke: #9d7c5c; stroke-width: 2.4px; }
.signs text { font-family: "Liberation Sans", sans-serif; font-size: 18px; font-weight: 400; text-anchor: middle; fill: #6d5f22; stroke: #6d5f22; stroke-width: .5px; transform: translateY(6.5px); }
.label text { font-size: 21.5px; font-weight: 500; text-anchor: middle; paint-order: stroke; stroke: #f4f8fa; stroke-width: 4px; stroke-linejoin: round; }
.label-beach text { fill: #2d8dcc; }
.label-park text { fill: #55802e; }
.label-isle text { fill: #4c7689; }
.label-air text { fill: #48728a; text-anchor: end; }
.label-air circle { fill: #587f96; }
.label-air path { fill: none; stroke: #fff; stroke-width: 2.4; }
.label-city text { font-size: 26px; text-anchor: start; fill: #444; }
.label-city circle { fill: #fff; stroke: #444; stroke-width: 2px; }
.label-city .dot { fill: #444; stroke: none; }
.label-ferry text { font-size: 20.5px; font-weight: 500; text-anchor: middle; fill: #3a7488; }
.label-ferry .cut { text-anchor: end; }
.scale path { fill: none; stroke: #000; stroke-width: 3.2; }
.scale-km { font-size: 18px; font-weight: 700; }
.scale-brand { font-size: 25px; font-weight: 500; }

/* dialog */
.overlay {
  position: absolute;
  inset: 0;
  display: flex;
  align-items: center;
  justify-content: center;
  padding-left: 8px;
  background: rgba(0, 0, 0, .3);
}
.modal {
  position: relative;
  width: 1282.5px;
  height: 1643px;
  padding: 64px 52px 0;
  border-radius: 25px;
  background: #fff;
  box-shadow: 0 6px 40px rgba(0, 0, 0, .24);
  font-size: 27.73px;
  line-height: 46.9px;
}
.modal h2 { margin-bottom: 53.3px; font-size: 38.5px; line-height: 56px; font-weight: 700; text-align: center; }
.modal section { margin-bottom: 29.5px; }
.modal h3 { font-size: inherit; font-weight: 700; }
.modal .indent { padding-left: 28.6px; }
.modal-close {
  position: absolute;
  top: 14px;
  right: 12px;
  width: 50px;
  height: 50px;
  border: 0;
  background: none;
  font-size: 30px;
  font-weight: 700;
  -webkit-text-stroke: 1px #000;
}
```
